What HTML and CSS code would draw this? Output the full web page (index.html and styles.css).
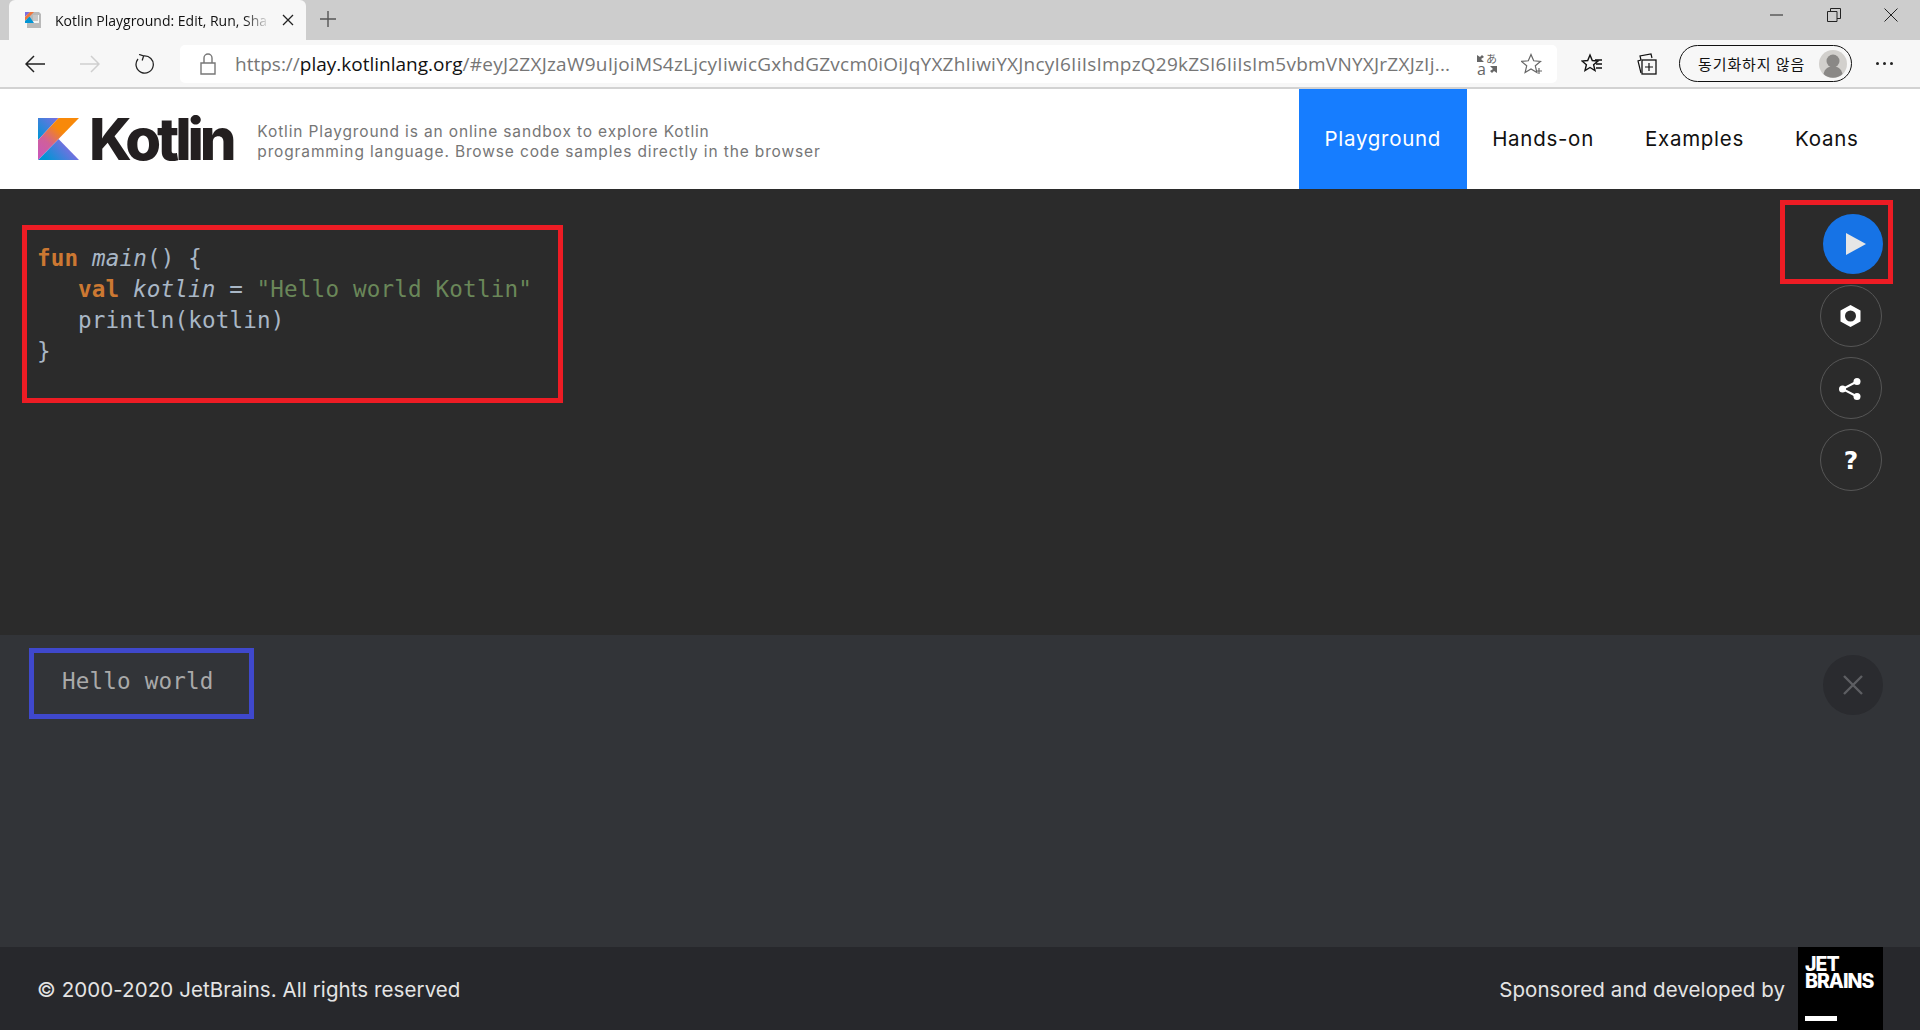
FILE: index.html
```html
<!DOCTYPE html>
<html lang="en">
<head>
<meta charset="utf-8">
<title>Kotlin Playground</title>
<link rel="stylesheet" href="styles.css">
</head>
<body>
<svg class="defs" width="0" height="0" aria-hidden="true">
  <defs>
    <linearGradient id="kBand" x1="0" y1="40" x2="34" y2="2" gradientUnits="userSpaceOnUse">
      <stop offset="0" stop-color="#c757bc"/><stop offset=".35" stop-color="#d0609a"/><stop offset=".7" stop-color="#f88909"/><stop offset="1" stop-color="#f88909"/>
    </linearGradient>
    <linearGradient id="kTop" x1="0" y1="20" x2="20" y2="0" gradientUnits="userSpaceOnUse">
      <stop offset="0" stop-color="#0095d5"/><stop offset="1" stop-color="#7c6ee0"/>
    </linearGradient>
    <linearGradient id="kBot" x1="6" y1="44" x2="30" y2="22" gradientUnits="userSpaceOnUse">
      <stop offset=".1" stop-color="#0095d5"/><stop offset=".9" stop-color="#7c6ee0"/>
    </linearGradient>
  </defs>
</svg>

<div class="tabstrip">
  <div class="tab">
    <svg class="favicon" viewBox="0 0 18 18">
      <path d="M3 1h12l2 2v14H3z" fill="#b9b9b9"/>
      <rect x="9" y="4" width="6" height="8" fill="#f4f4f4"/>
      <path d="M9 5h5M9 7h5M9 9h5" stroke="#9a9a9a"/>
      <path d="M1 1h5L1 6z" fill="#7c6ee0"/>
      <path d="M6 1h4L1 10V6z" fill="#f0763c"/>
      <path d="M1 10 5.500 5.500 10 12H1z" fill="#0095d5"/>
    </svg>
    <span class="tab-title">Kotlin Playground: Edit, Run, Sha</span>
    <svg class="tab-close" viewBox="0 0 12 12"><path d="M1 1l10 10M11 1L1 11" stroke="#222" stroke-width="1.3"/></svg>
  </div>
  <svg class="new-tab" viewBox="0 0 16 16"><path d="M8 0v16M0 8h16" stroke="#555" stroke-width="1.4"/></svg>
  <div class="window-controls">
    <svg class="win-icon" viewBox="0 0 14 14"><path d="M0 7h13" stroke="#222"/></svg>
    <svg class="win-icon" viewBox="0 0 14 14"><path d="M.5 3.500h9.500v10H.5zM3.500 3.500V.5h10v10H10" fill="none" stroke="#222"/></svg>
    <svg class="win-icon" viewBox="0 0 14 14"><path d="M.5.5l13 13M13.500.5l-13 13" stroke="#222"/></svg>
  </div>
</div>

<div class="toolbar">
  <svg class="nav-icon first" viewBox="0 0 20 20"><path d="M20 10H1M9 2l-8 8 8 8" fill="none" stroke="#222" stroke-width="1.5"/></svg>
  <svg class="nav-icon" viewBox="0 0 20 20"><path d="M0 10h19M11 2l8 8-8 8" fill="none" stroke="#cfcfcf" stroke-width="1.5"/></svg>
  <svg class="nav-icon" viewBox="0 0 22 22"><path d="M9.500 2.100A9.500 9.500 0 1 1 3.300 5.500M4.500 .5l5 1.600-1.600 5" fill="none" stroke="#222" stroke-width="1.4"/></svg>
  <div class="address">
    <svg class="lock" viewBox="0 0 16 22"><path d="M1 10h14v11H1zM4 10V5a4 4 0 0 1 8 0v5" fill="none" stroke="#777" stroke-width="1.4"/></svg>
    <div class="url"><span class="grey">https://</span><span class="host">play.kotlinlang.org</span><span class="grey tail">/#eyJ2ZXJzaW9uIjoiMS4zLjcyIiwicGxhdGZvcm0iOiJqYXZhIiwiYXJncyI6IiIsImpzQ29kZSI6IiIsIm5vbmVNYXJrZXJzIj...</span></div>
    <div class="translate">
      <svg class="tr-arrows" viewBox="0 0 20 20"><path d="M0 1v7h7L4 5l3-2-2-2-2 2zM20 19v-7h-7l3 3-3 2 2 2 2-2z" fill="#666"/></svg>
      <span class="tr-a">a</span><span class="tr-j">あ</span>
    </div>
    <svg class="addr-star" viewBox="0 0 22 22"><path d="M10 1.500l2.700 6.300 6.800.6-5.200 4.400 1.600 6.700L10 16l-5.900 3.500 1.600-6.700L.5 8.400l6.800-.6z" fill="none" stroke="#666" stroke-width="1.2"/><path d="M18 15v6M15 18h6" stroke="#666" stroke-width="1.2"/></svg>
  </div>
  <svg class="tool-icon fav" viewBox="0 0 22 22"><path d="M9 2l2.300 5.500 5.700.5-4.400 3.700 1.400 5.800L9 14.500 4 17.500l1.400-5.800L1 8l5.700-.5z" fill="none" stroke="#111" stroke-width="1.400"/><path d="M14 7h7M15 11h6M15 15h6" stroke="#111" stroke-width="1.400"/></svg>
  <svg class="tool-icon coll" viewBox="0 0 22 22"><path d="M5 7 4 3l11-2 1 4" fill="none" stroke="#111" stroke-width="1.200"/><path d="M5 20 2 8l3-1" fill="none" stroke="#111" stroke-width="1.200"/><rect x="6" y="7" width="14" height="14" fill="none" stroke="#111" stroke-width="1.300"/><path d="M13 10v8M9 14h8" stroke="#111" stroke-width="1.200"/></svg>
  <div class="profile">
    <span class="profile-text">동기화하지 않음</span>
    <svg class="avatar" viewBox="0 0 28 28"><circle cx="14" cy="14" r="14" fill="#d2d0cd"/><circle cx="14" cy="11" r="6.500" fill="#8a8886"/><path d="M4.500 24c1.500-6 5-7.500 9.500-7.500S22 18 23.500 24a14 14 0 0 1-19 0z" fill="#8a8886"/></svg>
  </div>
  <div class="more"><i></i><i></i><i></i></div>
</div>

<header class="site-header">
  <div class="brand">
    <svg class="k-mark" viewBox="0 0 41 42">
      <path d="M0 42 20.500 21 41 42z" fill="url(#kBot)"/>
      <path d="M0 0h20.500L0 22z" fill="url(#kTop)"/>
      <path d="M20.500 0 0 22v20L20.500 21 41 0z" fill="url(#kBand)"/>
    </svg>
    <span class="k-word">Kotlin</span>
  </div>
  <div class="tagline">
    <div>Kotlin Playground is an online sandbox to explore Kotlin</div>
    <div>programming language. Browse code samples directly in the browser</div>
  </div>
  <nav class="nav">
    <a class="nav-item active">Playground</a>
    <a class="nav-item">Hands-on</a>
    <a class="nav-item">Examples</a>
    <a class="nav-item">Koans</a>
  </nav>
</header>

<main class="editor">
  <div class="code-box">
    <div class="line"><span class="kw">fun</span><span class="em gap">main</span><span>()</span><span class="gap">{</span></div>
    <div class="line indent"><span class="kw">val</span><span class="em gap">kotlin</span><span class="gap">=</span><span class="str gap">"Hello world Kotlin"</span></div>
    <div class="line indent"><span>println(kotlin)</span></div>
    <div class="line"><span>}</span></div>
  </div>
  <div class="tools">
    <div class="run-box">
      <div class="run-btn"><svg class="run-tri" viewBox="0 0 20 22"><path d="M0 0l20 11L0 22z" fill="#e6e6e6"/></svg></div>
    </div>
    <div class="round"><svg class="round-icon" viewBox="0 0 20 22"><path fill-rule="evenodd" d="M10 0l10 5.500v11L10 22 0 16.500v-11zM10 5.500a5.500 5.500 0 1 0 0 11 5.500 5.500 0 0 0 0-11z" fill="#fff"/></svg></div>
    <div class="round"><svg class="share-icon" viewBox="0 0 22 22"><circle cx="18" cy="3.500" r="3.500" fill="#fff"/><circle cx="18" cy="18.500" r="3.500" fill="#fff"/><circle cx="3.500" cy="11" r="3.500" fill="#fff"/><path d="M18 3.500 3.500 11 18 18.500" fill="none" stroke="#fff" stroke-width="2"/></svg></div>
    <div class="round help">?</div>
  </div>
</main>

<section class="output">
  <div class="out-box">Hello world</div>
  <div class="out-close"><svg class="out-x" viewBox="0 0 20 20"><path d="M1 1l18 18M19 1 1 19" stroke="#5d5e62" stroke-width="2.400"/></svg></div>
</section>

<footer class="footer">
  <span class="foot-text">© 2000-2020 JetBrains. All rights reserved</span>
  <div class="sponsor">
    <span class="foot-text">Sponsored and developed by</span>
    <div class="jb"><div class="jb-text">JET</div><div class="jb-text">BRAINS</div><span class="jb-bar"></span></div>
  </div>
</footer>
</body>
</html>
```

FILE: styles.css
```css
* { box-sizing: border-box; }
html, body { margin: 0; height: 100%; }
body {
  width: 1920px;
  height: 1030px;
  overflow: hidden;
  display: flex;
  flex-direction: column;
  font-family: "Open Sans", "Noto Sans CJK KR", sans-serif;
  background: #fff;
}
.defs { position: absolute; }

/* browser chrome */
.tabstrip {
  height: 40px;
  flex: none;
  display: flex;
  align-items: center;
  background: #cdcdcd;
}
.tab {
  width: 297px;
  height: 40px;
  margin-left: 9px;
  padding: 0 12px 0 15px;
  display: flex;
  align-items: center;
  background: #f7f7f7;
  border-radius: 6px 6px 0 0;
}
.favicon { width: 18px; height: 18px; flex: none; }
.tab-title {
  width: 217px;
  margin-left: 13px;
  font-size: 14px;
  color: #111;
  white-space: nowrap;
  -webkit-mask-image: linear-gradient(to right, #000 88%, transparent 100%);
  mask-image: linear-gradient(to right, #000 88%, transparent 100%);
}
.tab-close { width: 12px; height: 12px; margin-left: 12px; flex: none; }
.new-tab { width: 16px; height: 16px; margin-left: 14px; margin-top: -2px; flex: none; }
.window-controls {
  margin-left: auto;
  margin-right: 22px;
  margin-top: -11px;
  display: flex;
  gap: 43px;
}
.win-icon { width: 14px; height: 14px; display: block; }

.toolbar {
  height: 49px;
  flex: none;
  display: flex;
  align-items: center;
  background: #f7f7f7;
  border-bottom: 2px solid #d2d2d2;
}
.nav-icon { width: 20px; height: 20px; margin-right: 35px; flex: none; }
.nav-icon.first { margin-left: 25px; }
.address {
  width: 1377px;
  height: 38px;
  margin-left: -10px;
  padding-left: 20px;
  display: flex;
  align-items: center;
  background: #fff;
  border-radius: 5px;
  flex: none;
}
.lock { width: 16px; height: 22px; flex: none; }
.url {
  width: 1216px;
  margin-left: 19px;
  font-size: 19px;
  white-space: nowrap;
  flex: none;
}
.grey { color: #767676; }
.tail { letter-spacing: .23px; }
.host { color: #111; }
.translate {
  width: 20px;
  height: 20px;
  margin-left: 26px;
  position: relative;
  color: #666;
  flex: none;
}
.tr-arrows { width: 20px; height: 20px; display: block; }
.tr-a { position: absolute; left: 0; bottom: -2px; font-size: 16px; line-height: 14px; color: #666; }
.tr-j { position: absolute; right: 0; top: -2px; font-size: 11px; line-height: 13px; color: #666; }
.addr-star { width: 22px; height: 22px; margin-left: 24px; flex: none; }
.tool-icon { width: 22px; height: 22px; flex: none; }
.fav { margin-left: 24px; }
.coll { margin-left: 33px; }
.profile {
  width: 173px;
  height: 37px;
  margin-left: 21px;
  padding: 0 4px 0 18px;
  display: flex;
  align-items: center;
  justify-content: space-between;
  border: 1.5px solid #111;
  border-radius: 19px;
  flex: none;
}
.profile-text { font-family: "Noto Sans CJK KR", sans-serif; font-size: 15px; letter-spacing: .9px; color: #111; white-space: nowrap; }
.avatar { width: 28px; height: 28px; flex: none; }
.more { margin-left: 24px; display: flex; gap: 4px; }
.more i { width: 3px; height: 3px; border-radius: 50%; background: #222; }

/* site header */
.site-header {
  height: 100px;
  flex: none;
  display: flex;
  align-items: center;
  padding-left: 38px;
  padding-right: 36px;
  background: #fff;
}
.brand { display: flex; align-items: center; }
.k-mark { width: 41px; height: 42px; flex: none; }
.k-word {
  margin-left: 10px;
  font-family: Inter, sans-serif;
  font-weight: 800;
  font-size: 58px;
  line-height: 42px;
  letter-spacing: -4.2px;
  color: #231f20;
}
.tagline {
  margin: 5px 0 0 25px;
  font-family: Inter, sans-serif;
  font-size: 15.500px;
  line-height: 20px;
  letter-spacing: .86px;
  color: #767676;
  white-space: nowrap;
}
.nav { margin-left: auto; height: 100%; display: flex; }
.nav-item {
  padding: 0 25.500px 2px;
  display: flex;
  align-items: center;
  font-family: Inter, sans-serif;
  font-size: 20.500px;
  letter-spacing: .72px;
  color: #111;
}
.nav-item.active { background: #167dff; color: #fff; }

/* editor */
.editor {
  height: 446px;
  flex: none;
  display: flex;
  align-items: flex-start;
  justify-content: space-between;
  background: #2b2b2b;
}
.code-box {
  width: 541px;
  height: 178px;
  margin: 36px 0 0 22px;
  padding: 13px 0 0 10px;
  border: 5px solid #ed1c24;
  font-family: "DejaVu Sans Mono", monospace;
  font-size: 22.600px;
  line-height: 31px;
  letter-spacing: .17px;
  color: #a9b7c6;
  white-space: nowrap;
}
.line { height: 31px; display: flex; }
.indent { padding-left: 41px; }
.gap { margin-left: 13.600px; }
.kw { color: #cc7832; font-weight: 700; }
.em { font-style: italic; }
.str { color: #6a8759; }
.tools {
  margin: 11px 27px 0 0;
  display: flex;
  flex-direction: column;
  align-items: flex-end;
  gap: 10px;
}
.run-box {
  width: 113px;
  height: 84px;
  margin-bottom: -9px;
  padding: 4px 5px 0 0;
  display: flex;
  align-items: center;
  justify-content: flex-end;
  border: 5px solid #ed1c24;
}
.run-btn {
  width: 60px;
  height: 60px;
  padding-left: 6px;
  display: flex;
  align-items: center;
  justify-content: center;
  border-radius: 50%;
  background: #1673e6;
}
.run-tri { width: 20px; height: 22px; }
.round {
  width: 62px;
  height: 62px;
  margin-right: 11px;
  display: flex;
  align-items: center;
  justify-content: center;
  border: 1px solid #565656;
  border-radius: 50%;
}
.round-icon { width: 21px; height: 22px; margin-right: 1px; }
.share-icon { width: 22px; height: 22px; margin: 2px 3px 0 0; }
.help {
  font-family: "DejaVu Sans", sans-serif;
  font-weight: 700;
  font-size: 25px;
  color: #fff;
}

/* output */
.output {
  height: 312px;
  flex: none;
  display: flex;
  align-items: flex-start;
  justify-content: space-between;
  background: #323438;
}
.out-box {
  width: 225px;
  height: 71px;
  margin: 13px 0 0 29px;
  padding: 13px 0 0 28px;
  border: 5px solid #3f48cc;
  font-family: "DejaVu Sans Mono", monospace;
  font-size: 22.600px;
  line-height: 31px;
  letter-spacing: .17px;
  color: #a9a9a9;
  white-space: nowrap;
}
.out-close {
  width: 60px;
  height: 60px;
  margin: 20px 37px 0 0;
  display: flex;
  align-items: center;
  justify-content: center;
  border-radius: 50%;
  background: #2a2b2f;
}
.out-x { width: 20px; height: 20px; }

/* footer */
.footer {
  height: 83px;
  flex: none;
  display: flex;
  align-items: center;
  justify-content: space-between;
  padding: 0 37px;
  background: #27282c;
}
.foot-text {
  padding-top: 2px;
  font-family: Inter, sans-serif;
  font-size: 20.500px;
  letter-spacing: .08px;
  color: #e4e4e4;
}
.sponsor { display: flex; align-items: center; gap: 13px; }
.jb {
  width: 85px;
  height: 83px;
  padding: 9px 7px 9px;
  display: flex;
  flex-direction: column;
  background: #000;
}
.jb-text {
  font-family: Inter, sans-serif;
  font-weight: 800;
  font-size: 19.500px;
  line-height: 17px;
  letter-spacing: -1px;
  color: #fff;
}
.jb-bar { width: 32px; height: 5px; margin-top: auto; background: #fff; }
```
